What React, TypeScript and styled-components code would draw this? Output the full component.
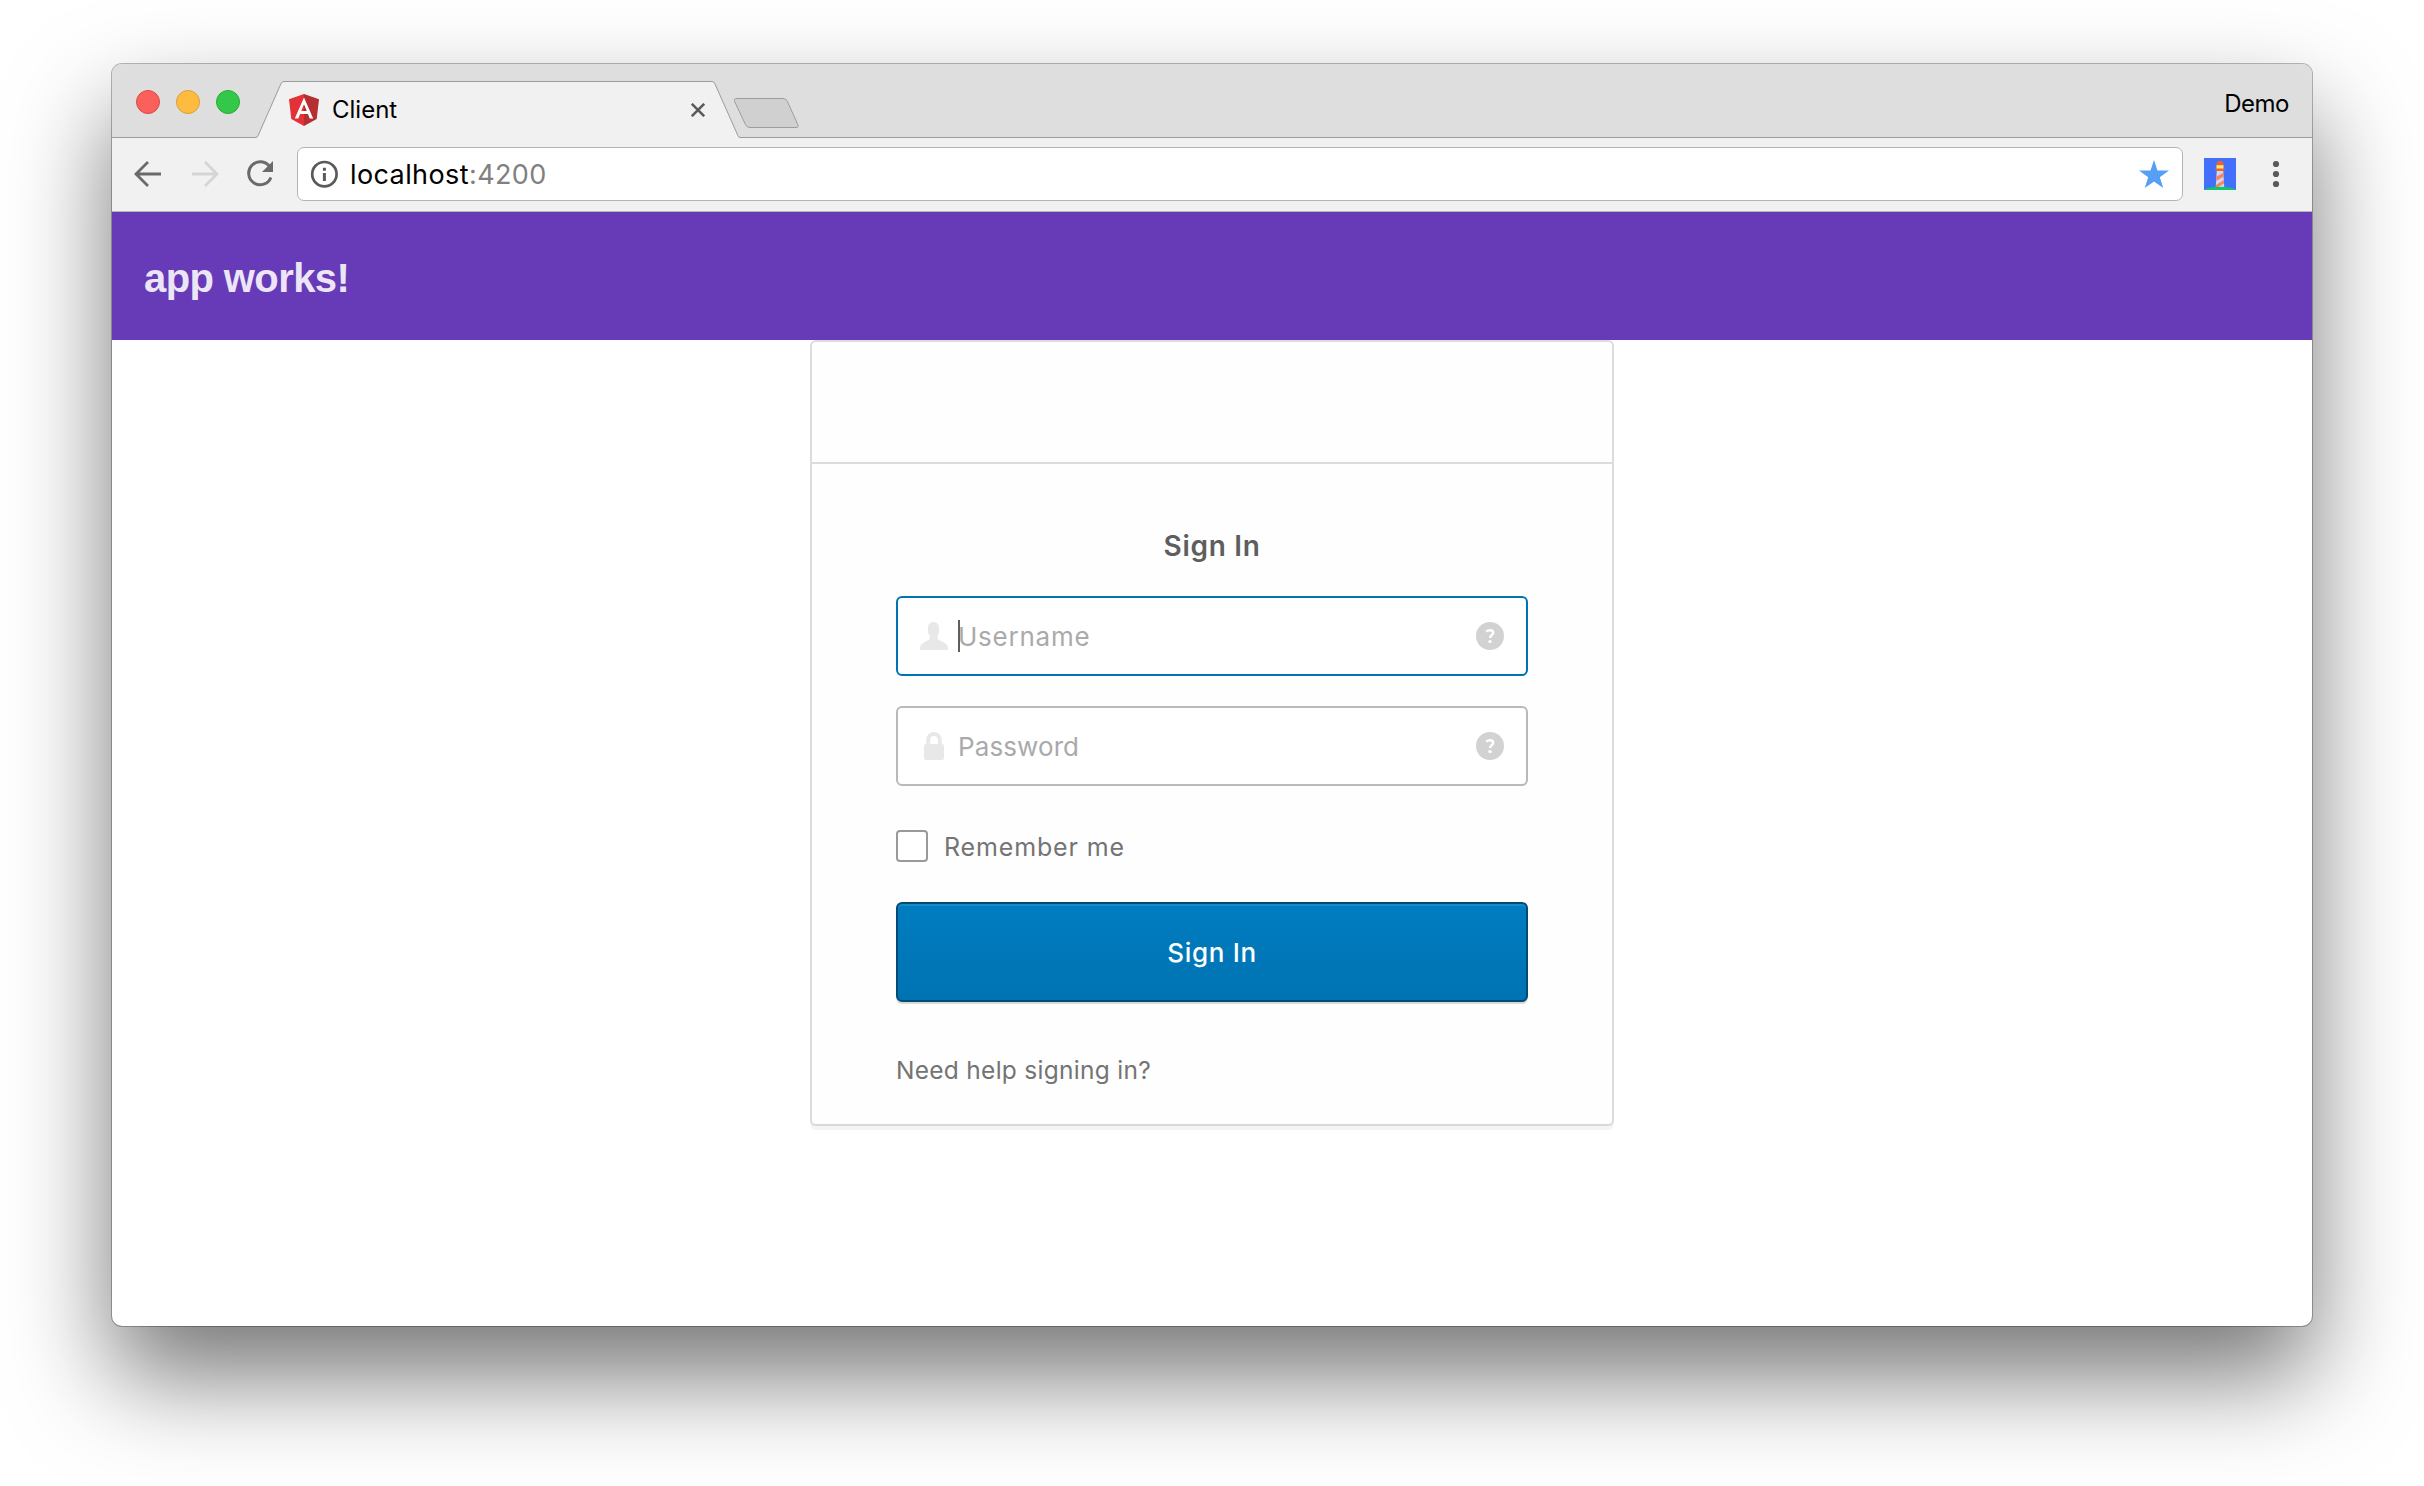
import React from "react";
import styled, { createGlobalStyle } from "styled-components";

const GlobalStyle = createGlobalStyle`
  *, *::before, *::after { box-sizing: border-box; }
  html, body { margin: 0; background: #fff; }
  body { overflow: hidden; }
  svg { display: block; flex: none; }
`;

const ui = `Inter, Roboto, sans-serif`;

const Desktop = styled.div`
  width: 2424px;
  height: 1486px;
  padding: 64px 112px 160px;
  background: #fff;
  overflow: hidden;
`;

const Window = styled.div`
  display: flex;
  flex-direction: column;
  height: 1262px;
  border-radius: 10px;
  background: #fff;
  box-shadow: 0 0 0 1px rgba(0, 0, 0, 0.27), 0 50px 100px rgba(0, 0, 0, 0.54);
`;

const TabStrip = styled.div`
  display: flex;
  height: 74px;
  padding: 0 23px 0 24px;
  border-bottom: 1px solid #9b9b9b;
  border-radius: 10px 10px 0 0;
  background: #dedede;
`;

const Lights = styled.div`
  display: flex;
  gap: 16px;
  padding-top: 26px;
  width: 120px;
`;

const Light = styled.span<{ $fill: string; $edge: string }>`
  width: 24px;
  height: 24px;
  border-radius: 50%;
  border: 1px solid ${(p) => p.$edge};
  background: ${(p) => p.$fill};
`;

const Tab = styled.div`
  position: relative;
  display: flex;
  align-items: center;
  align-self: flex-end;
  width: 484px;
  height: 57px;
  margin-bottom: -1px;
  padding: 0 35px 0 33px;
`;

const TabShape = styled.svg`
  position: absolute;
  inset: 0;
`;

const TabLabel = styled.span`
  position: relative;
  flex: 1;
  margin-left: 13px;
  font: 400 24px/30px ${ui};
  color: #000;
`;

const Above = styled.div`
  position: relative;
`;

const NewTab = styled.div`
  margin: 33px 0 0 -7px;
`;

const Profile = styled.span`
  margin: 25px 0 0 auto;
  font: 400 24px/30px ${ui};
  letter-spacing: -0.5px;
  color: #000;
`;

const Toolbar = styled.div`
  display: flex;
  align-items: center;
  height: 74px;
  padding: 0 30px 1px 21px;
  border-bottom: 1px solid #b5b5b5;
  background: #f1f1f1;
`;

const NavButtons = styled.div`
  display: flex;
  gap: 26px;
  width: 164px;
`;

const Address = styled.div`
  display: flex;
  align-items: center;
  flex: none;
  width: 1886px;
  height: 54px;
  padding: 0 13px 0 11px;
  border: 1px solid #b4b4b4;
  border-radius: 7px;
  background: #fff;
`;

const Url = styled.div`
  flex: 1;
  margin-left: 11px;
  padding-top: 2px;
  font: 400 27px/34px ${ui};
  letter-spacing: 0.4px;
  color: #000;
`;

const Port = styled.span`
  color: #808080;
`;

const Actions = styled.div`
  display: flex;
  align-items: center;
  justify-content: space-between;
  flex: 1;
  margin-left: 21px;
`;

const AppBar = styled.header`
  display: flex;
  align-items: center;
  height: 128px;
  padding: 4px 32px 0;
  background: #673ab7;
`;

const AppTitle = styled.h1`
  margin: 0;
  font: 700 40px/48px "Liberation Sans", Arial, sans-serif;
  letter-spacing: -0.6px;
  color: #ebe5f6;
`;

const Card = styled.main`
  width: 804px;
  height: 786px;
  margin: 0 auto;
  border: 2px solid #dcdcdc;
  border-bottom-color: #d8d8d8;
  border-radius: 6px;
  box-shadow: 0 4px 0 #f4f4f4;
  background: #fefefe;
`;

const CardHeader = styled.div`
  height: 122px;
  border-bottom: 2px solid #dcdcdc;
`;

const Form = styled.form`
  display: flex;
  flex-direction: column;
  padding: 62px 84px 0;
`;

const FormTitle = styled.h2`
  margin: 0 0 30px;
  font: 600 28px/40px ${ui};
  letter-spacing: 0.7px;
  text-align: center;
  color: #5e5e5e;
`;

const Field = styled.label<{ $focused?: boolean }>`
  display: flex;
  align-items: center;
  height: 80px;
  margin-bottom: 30px;
  padding: 0 22px;
  border: 2px solid ${(p) => (p.$focused ? "#0074b3" : "#b9b9b9")};
  border-radius: 6px;
  background: #fff;
`;

const Caret = styled.span`
  width: 2px;
  height: 32px;
  margin: 0 -2px 0 10px;
  background: #5e5e5e;
`;

const Placeholder = styled.span<{ $gap: number; $track: number }>`
  flex: 1;
  margin-left: ${(p) => p.$gap}px;
  padding-top: 2px;
  font: 400 26px/34px ${ui};
  letter-spacing: ${(p) => p.$track}px;
  color: #aaa;
`;

const Remember = styled.label`
  display: flex;
  align-items: center;
  height: 32px;
  margin: 14px 0 40px;

  & > :last-child {
    padding-top: 2px;
  }
`;

const Box = styled.span`
  width: 32px;
  height: 32px;
  margin-right: 16px;
  border: 2px solid #999;
  border-radius: 4px;
  background: #fff;
`;

const Small = styled.span<{ $size: number; $track: number }>`
  font: 400 ${(p) => p.$size}px/30px ${ui};
  letter-spacing: ${(p) => p.$track}px;
  color: #747474;
`;

const Submit = styled.button`
  height: 100px;
  margin: 0 0 53px;
  padding: 2px 0 0;
  border: 2px solid #004b75;
  border-radius: 6px;
  background: linear-gradient(#007dc1, #0073b2);
  box-shadow: inset 0 2px 0 rgba(255, 255, 255, 0.1), 0 2px 0 #d9d9d9;
  font: 500 26px/34px ${ui};
  letter-spacing: 0.7px;
  color: #fff;
`;

const Arrow = ({ color, flip }: { color: string; flip?: boolean }) => (
  <svg width="30" height="30" viewBox="0 0 30 30" fill="none" stroke={color} strokeWidth="2.8">
    <g transform={flip ? "translate(31 0) scale(-1 1)" : undefined}>
      <path d="M28 15H3.4M15 3 3 15l12 12" strokeLinejoin="miter" />
    </g>
  </svg>
);

const Help = () => (
  <svg width="28" height="28" viewBox="0 0 28 28">
    <circle cx="14" cy="14" r="14" fill="#d2d2d2" />
    <path d="M10.1 9.6C11.2 8.7 12.5 8.2 14 8.2c2 0 3.2 1 3.2 2.5 0 2.4-3.1 2.5-3.1 5.2" fill="none" stroke="#fff" strokeWidth="2.5" />
    <circle cx="14" cy="19.6" r="1.7" fill="#fff" />
  </svg>
);

export default function App() {
  return (
    <>
      <GlobalStyle />
      <Desktop>
        <Window>
          <TabStrip>
            <Lights>
              <Light $fill="#fc605b" $edge="#df4644" />
              <Light $fill="#fdbc40" $edge="#de9f34" />
              <Light $fill="#34c84a" $edge="#27aa35" />
            </Lights>
            <Tab>
              <TabShape width="484" height="57" viewBox="0 0 484 57">
                <path d="M0 57V56.5Q1.3 56.3 2 54.8L24.8 3Q26 .5 28 .5H456Q458 .5 459 3L482 54.8Q482.7 56.3 484 56.5V57Z" fill="#f1f1f1" />
                <path d="M0 56.5Q1.3 56.3 2 54.8L24.8 3Q26 .5 28 .5H456Q458 .5 459 3L482 54.8Q482.7 56.3 484 56.5" fill="none" stroke="#9b9b9b" />
              </TabShape>
              <Above>
                <svg width="30" height="32" viewBox="0 0 30 32">
                  <path d="M15 0 0 5.3 2.3 25 15 32Z" fill="#e23237" />
                  <path d="M15 0 30 5.3 27.7 25 15 32Z" fill="#b52e31" />
                  <path fillRule="evenodd" d="M15 3.6 5.8 24.6h3.5l1.8-4.6h7.8l1.8 4.6h3.5ZM15 10.2l2.8 6.8h-5.6Z" fill="#fff" />
                </svg>
              </Above>
              <TabLabel>Client</TabLabel>
              <Above>
                <svg width="14" height="14" viewBox="0 0 14 14" stroke="#5a5a5a" strokeWidth="2.5">
                  <path d="M.8.8 13.2 13.2M13.2.8.8 13.2" />
                </svg>
              </Above>
            </Tab>
            <NewTab>
              <svg width="68" height="32" viewBox="0 0 68 32">
                <path d="M4 1.5H50Q53 1.5 54.3 4.3L64.8 27.5Q66.2 30.5 63 30.5H17Q14 30.5 12.6 27.8L1.6 4.5Q.5 1.5 4 1.5Z" fill="#d0d0d0" stroke="#9d9d9d" />
              </svg>
            </NewTab>
            <Profile>Demo</Profile>
          </TabStrip>

          <Toolbar>
            <NavButtons>
              <Arrow color="#6a6a6a" />
              <Arrow color="#d5d5d5" flip />
              <svg width="30" height="30" viewBox="0 0 30 30">
                <path d="M24.6 7.6A11.5 11.5 0 1 0 25.9 18.5" fill="none" stroke="#6a6a6a" strokeWidth="3" />
                <path d="M28 2V13H17Z" fill="#6a6a6a" />
              </svg>
            </NavButtons>
            <Address>
              <svg width="30" height="30" viewBox="0 0 30 30">
                <circle cx="15.4" cy="15.2" r="12.2" fill="none" stroke="#5a5a5a" strokeWidth="2.7" />
                <path d="M13.9 8.7h3v3h-3zM13.9 13.9h3v8.200h-3z" fill="#5a5a5a" />
              </svg>
              <Url>
                localhost<Port>:4200</Port>
              </Url>
              <svg width="30" height="28" viewBox="0 0 30 28">
                <path d="M15 0 18.5 10.6H30L20.8 17.2 24.3 28 15 21.4 5.7 28 9.2 17.2 0 10.6H11.5Z" fill="#569ff4" />
              </svg>
            </Address>
            <Actions>
              <svg width="32" height="32" viewBox="0 0 32 32">
                <path d="M0 0H32V32H0Z" fill="#4270fb" />
                <path d="M12.8 12H19.2L20.3 30H11.7Z" fill="#d3d5ee" />
                <path d="M12.600 18.500 19.300 15 19.600 18.500 12.300 23ZM12 27 19.800 22 20 25.500 11.800 30Z" fill="#fd8258" />
                <path d="M12.5 7H19.5V11H12.5Z" fill="#ffe873" />
                <path d="M12.300 7.200Q12.300 3 16 3T19.700 7.200ZM11.500 10.500H20.500V13H11.500Z" fill="#f4602c" />
                <path d="M0 32Q4 28.7 16 28.7T32 32Z" fill="#12c46c" />
              </svg>
              <svg width="12" height="28" viewBox="0 0 12 28" fill="#5a5a5a">
                <circle cx="6" cy="4" r="3.1" />
                <circle cx="6" cy="14" r="3.1" />
                <circle cx="6" cy="24" r="3.1" />
              </svg>
            </Actions>
          </Toolbar>

          <AppBar>
            <AppTitle>app works!</AppTitle>
          </AppBar>

          <Card>
            <CardHeader />
            <Form>
              <FormTitle>Sign In</FormTitle>
              <Field $focused>
                <svg width="28" height="28" viewBox="0 0 28 28">
                  <path d="M8 6C8 2 10.2 0 13.5 0S19 2 19 6V9.5C19 12 17.8 12.5 17.5 14.5 17.3 16.5 18 17.5 20 18.5L25 21C27.5 22.3 28 24.5 28 28H0C0 24.5.5 22.3 3 21L7.5 18.5C9.5 17.5 10 16.5 9.8 14.5 9.5 12.5 8 12 8 9.5Z" fill="#e8e8e8" />
                </svg>
                <Caret />
                <Placeholder $gap={0} $track={0.75}>Username</Placeholder>
                <Help />
              </Field>
              <Field>
                <svg width="28" height="28" viewBox="0 0 28 28">
                  <path d="M8.2 13V8a5.8 6 0 0 1 11.6 0V13" fill="none" stroke="#e8e8e8" strokeWidth="4" />
                  <rect x="4" y="12" width="20" height="16" rx="2" fill="#e8e8e8" />
                </svg>
                <Placeholder $gap={10} $track={0.1}>Password</Placeholder>
                <Help />
              </Field>
              <Remember>
                <Box />
                <Small $size={25} $track={0.85}>Remember me</Small>
              </Remember>
              <Submit type="button">Sign In</Submit>
              <Small $size={24.5} $track={0.28}>Need help signing in?</Small>
            </Form>
          </Card>
        </Window>
      </Desktop>
    </>
  );
}
